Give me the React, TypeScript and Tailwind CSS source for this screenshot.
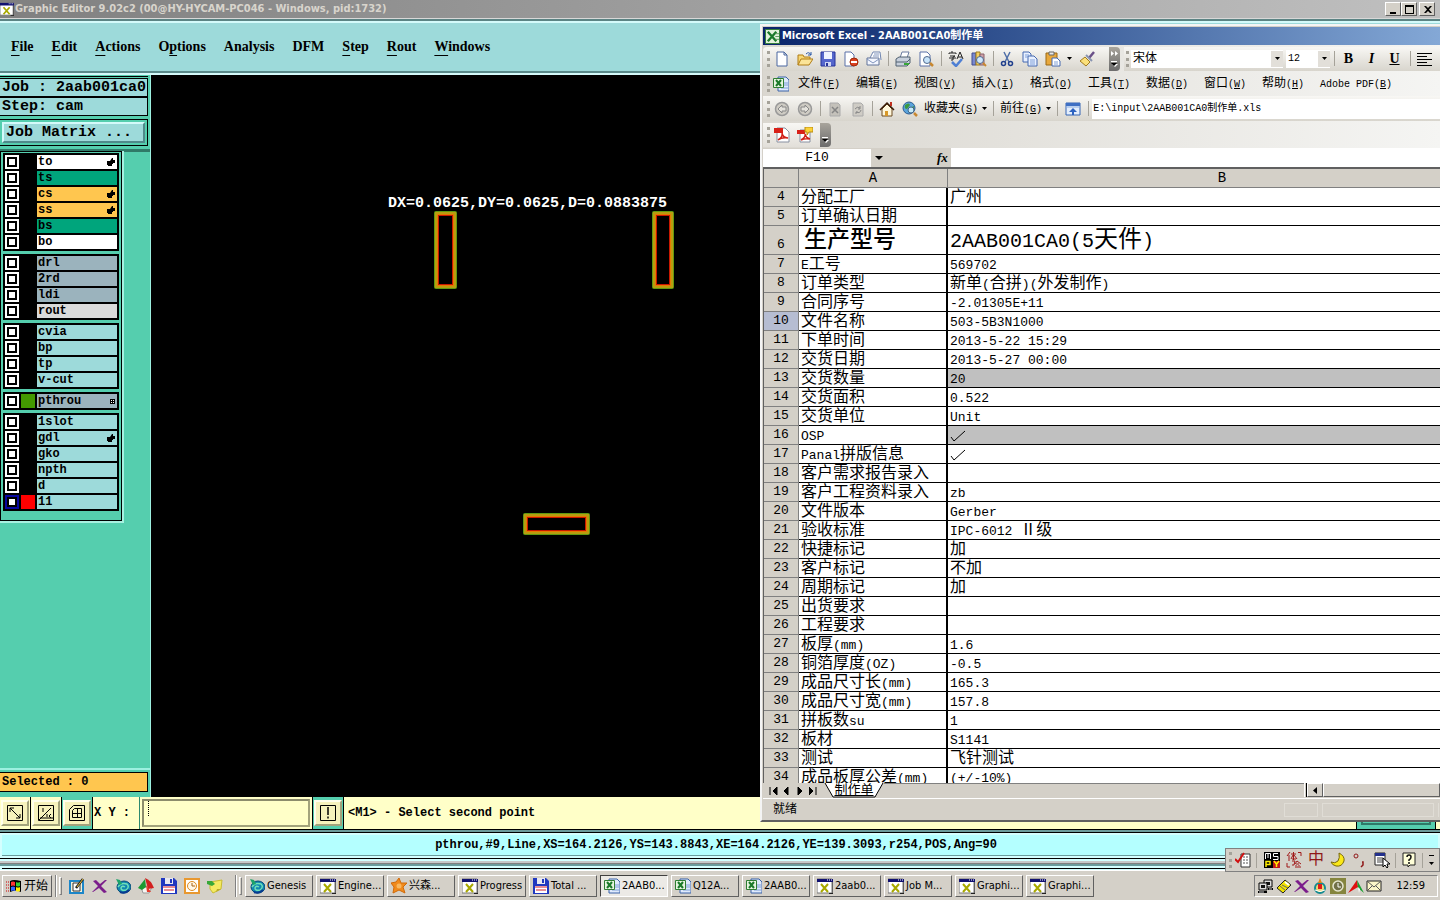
import React from "react";

const icons: Record<string, React.ReactNode> = {
  xwin: (
    <>
      <path d="M0 1h15v14H0z" fill="#fff" stroke="#777" />
      <path d="M0 1h16v3H0z" fill="#101070" />
      <path d="M10 2h1M12 2h1M14 2h1" stroke="#fff" />
      <path d="M4 6l7 8M11 6l-7 8" stroke="#a8a800" strokeWidth="2" />
      <path d="M12 15.500h4V4" stroke="#222" fill="none" />
    </>
  ),
  excel: (
    <>
      <path d="M5 1h8l3 3v11H5z" fill="#dfeafc" stroke="#3a62a8" />
      <path d="M11 7h4M11 9h4M8 12h7" stroke="#7fa0d8" />
      <path d="M.5 2.500h10v9H.5z" fill="#e6f5e0" stroke="#2f7d32" />
      <path d="M3 4l5 6M8 4l-5 6" stroke="#1b7a2a" strokeWidth="2" />
    </>
  ),
  excelApp: (
    <>
      <path d="M.5.500h15v15H.5z" fill="#e4f2dc" stroke="#2f7d32" />
      <path d="M3 3l9 10M12 3L3 13" stroke="#1b7a2a" strokeWidth="2.500" />
      <path d="M11 5h4M11 8h4M11 11h4" stroke="#5a9a5a" />
    </>
  ),
  flag: (
    <>
      <path d="M0 4h3M0 7h3M0 10h3M0 13h3" stroke="#c00" strokeDasharray="1 1" />
      <path d="M4 3q3-2 11 0v11q-5-3-11 0z" fill="#000" />
      <path d="M5 4q2-1 4 0v4q-2-1-4 0z" fill="#f33" />
      <path d="M10 4q2 1 4 0v4q-2 1-4 0z" fill="#3c3" />
      <path d="M5 9q2-1 4 0v4q-2-1-4 0z" fill="#36f" />
      <path d="M10 9q2 1 4 0v4q-2 1-4 0z" fill="#fe0" />
    </>
  ),
  desk: (
    <>
      <path d="M1 3h13v12H1z" fill="#f4f0d8" stroke="#1c86c8" strokeWidth="2" />
      <path d="M4 5h7v8H4z" fill="#fff" stroke="#333" />
      <path d="M14 1L7 10" stroke="#222" strokeWidth="2.500" />
      <path d="M14 1L8 9" stroke="#eec238" />
    </>
  ),
  purple: <path d="M1 3l3-1 4 4 5-4h2l-6 6 6 6-3 1-5-5-6 4H0l6-6z" fill="#7b1d8b" />,
  genesis: (
    <>
      <ellipse cx="9" cy="9" rx="7" ry="6" fill="#1286b0" stroke="#064c78" />
      <path d="M3 9q3-5 9-3 3 3-1 6-5 1-5-2 1-3 4-1" fill="none" stroke="#6fe0b8" strokeWidth="1.500" />
      <path d="M1 1l4 1 2 4-3 1z" fill="#1da36a" />
      <path d="M5 14q5 2 9-2" stroke="#083a90" strokeWidth="2" fill="none" />
    </>
  ),
  tri: (
    <>
      <path d="M3 9h11l-3 6H5z" fill="#f6f6f2" stroke="#999" />
      <path d="M7 0q6 2 9 10l-6 1z" fill="#d32020" />
      <path d="M0 10L7 1l1 8-4 3z" fill="#1c9a32" />
      <path d="M8 7l5 7H9z" fill="#e83a2a" />
    </>
  ),
  floppy: (
    <>
      <path d="M0 0h13l3 3v13H0z" fill="#2038c0" />
      <path d="M4 0h8v6H4z" fill="#e8e8f0" />
      <path d="M9 1h2v4H9z" fill="#2038c0" />
      <path d="M2 8h12v7H2z" fill="#fff" />
      <path d="M2 9h12M3 12h10" stroke="#d02030" />
    </>
  ),
  clock: (
    <>
      <path d="M1 1h14v14H1z" fill="#fff" stroke="#e89830" strokeWidth="2" />
      <circle cx="8" cy="8" r="4.500" fill="#fff8e8" stroke="#dd8a20" />
      <path d="M8 5v3h3" stroke="#a86010" fill="none" />
    </>
  ),
  note: (
    <>
      <path d="M3 4l12-2-1 9-8 4-3-4z" fill="#f4ea62" stroke="#c8bc30" />
      <path d="M0 3h5l3 3-3 2-5-2z" fill="#38a838" />
      <path d="M9 14l5-3-4 0z" fill="#b8aa28" />
    </>
  ),
  star: (
    <>
      <path d="M8 0l2 5 6 0-4 4 2 6-6-3-6 3 1-6-3-4 5-1z" fill="#f08a1c" stroke="#d06a08" />
      <circle cx="8" cy="8" r="2.500" fill="#f8b860" />
    </>
  ),
  pcs: (
    <>
      <path d="M6 2h8v7H6z" fill="#ddd" stroke="#000" />
      <path d="M8 4h4v3H8z" fill="#111" />
      <path d="M1 5h8v7H1z" fill="#ddd" stroke="#000" />
      <path d="M3 7h4v3H3z" fill="#111" />
      <path d="M0 14h9M10 11h5" stroke="#000" strokeWidth="2" />
      <path d="M1 14h5M11 11h3" stroke="#ccc" />
    </>
  ),
  card: (
    <>
      <path d="M1 10l8-8 6 5-8 8z" fill="#f2e400" stroke="#222" />
      <path d="M4 8l6 5M6 7l6 3" stroke="#666" />
      <path d="M9 4l4 3" stroke="#fff" strokeWidth="2" />
    </>
  ),
  flask: (
    <>
      <circle cx="8" cy="10" r="5" fill="#ecd878" stroke="#128a92" strokeWidth="2" />
      <path d="M8 0l2 5H6z" fill="#e08818" />
      <path d="M6 6h4v5H6z" fill="#e01818" />
      <path d="M3 12q5 3 10 0" stroke="#fff" fill="none" />
    </>
  ),
  oclock: (
    <>
      <path d="M0 0h16v16H0z" fill="#85853e" />
      <circle cx="8" cy="8" r="5" fill="#707048" stroke="#e6e6d0" strokeWidth="1.500" />
      <path d="M8 5v4h3" stroke="#fff" fill="none" />
    </>
  ),
  ared: (
    <>
      <path d="M0 15L9 2l1 7z" fill="#e01010" />
      <path d="M9 2l7 13-6-5z" fill="#18a030" />
      <path d="M10 9l2 2-1 4z" fill="#fff" />
    </>
  ),
  mail: (
    <>
      <path d="M1 3h14v10H1z" fill="#fbf6c8" stroke="#222" />
      <path d="M1 3l7 6 7-6M1 13l5-5M15 13l-5-5" stroke="#555" fill="none" />
    </>
  ),
  fresh: <path d="M3 1h7l3 3v11H3z M10 1v3h3" fill="#fff" stroke="#4a66a0" />,
  open: (
    <>
      <path d="M1 14V4h5l1 2h6v3" fill="#f7d774" stroke="#b07c14" />
      <path d="M1 14l3-6h12l-4 6z" fill="#fbe498" stroke="#b07c14" />
      <path d="M9 3q3-3 5 1M14 1v3h-3" stroke="#2c5aa8" fill="none" />
    </>
  ),
  save: (
    <>
      <path d="M1 1h14v14H1z" fill="#5566cc" stroke="#26339a" />
      <path d="M4 1h8v7H4z" fill="#eef2ff" />
      <path d="M5 11h6v4H5z" fill="#cfd6f2" />
      <path d="M6 12h2v3H6z" fill="#26339a" />
    </>
  ),
  perm: (
    <>
      <path d="M2 1h6l3 3v11H2z" fill="#fff" stroke="#5a70a8" />
      <circle cx="11" cy="11" r="4" fill="#dc4020" stroke="#a02808" />
      <path d="M8 11h6" stroke="#fff" strokeWidth="2" />
    </>
  ),
  letter: (
    <>
      <path d="M4 7l3-6h7l1 8" fill="#fff" stroke="#7085b0" />
      <path d="M1 7h12v7H1z" fill="#f4f7ff" stroke="#607398" />
      <path d="M1 8l6 4 6-4M8 3h5M7 5h6" stroke="#8094bd" fill="none" />
    </>
  ),
  print: (
    <>
      <path d="M5 7l2-6h7l-2 6" fill="#fff" stroke="#6a7ba0" />
      <path d="M1 8l3-2h11v6l-3 3H1z" fill="#c8d0dc" stroke="#506070" />
      <path d="M1 11h11l3-3" stroke="#506070" fill="none" />
      <path d="M9 12h5v2H9z" fill="#38a838" />
    </>
  ),
  preview: (
    <>
      <path d="M2 1h7l3 3v11H2z" fill="#fff" stroke="#5a70a8" />
      <circle cx="9" cy="9" r="3.500" fill="#c8e4fa" stroke="#50688c" />
      <path d="M12 12l3 3" stroke="#c88830" strokeWidth="2.500" />
    </>
  ),
  spell: (
    <>
      <path d="M1 3V2h7v1M4 0v2M2 5h5L5 6v3H3M1 7h7" stroke="#222" fill="none" />
      <path d="M9 8l3-7 3 7M10 6h4" stroke="#222" fill="none" />
      <path d="M4 11l4 4 6-7" stroke="#4f80d4" strokeWidth="2.500" fill="none" />
    </>
  ),
  research: (
    <>
      <path d="M1 2h4v12H1z" fill="#7888d0" stroke="#404c90" />
      <path d="M5 1h4v13H5z" fill="#f4d060" stroke="#9a7a20" />
      <path d="M9 3h4v11H9z" fill="#d0a0a8" stroke="#886068" />
      <circle cx="9" cy="9" r="3.500" fill="#d0e8fc" stroke="#50688c" />
      <path d="M12 12l3 3" stroke="#c88830" strokeWidth="2" />
    </>
  ),
  cut: (
    <>
      <path d="M5 1l5 10M11 1L6 11" stroke="#506fa8" strokeWidth="1.500" />
      <circle cx="4.500" cy="12.500" r="2" fill="none" stroke="#203f8c" strokeWidth="1.500" />
      <circle cx="11.500" cy="12.500" r="2" fill="none" stroke="#203f8c" strokeWidth="1.500" />
    </>
  ),
  copy: (
    <>
      <path d="M1 1h6l2 2v8H1z" fill="#e8f0ff" stroke="#4468b0" />
      <path d="M6 5h6l3 3v7H6z" fill="#e8f0ff" stroke="#4468b0" />
      <path d="M3 4h4M3 6h3M8 9h5M8 11h5M8 13h5" stroke="#80a0d8" />
    </>
  ),
  paste: (
    <>
      <path d="M1 2h11v12H1z" fill="#e8a83c" stroke="#9a6814" />
      <path d="M4 1h5v3H4z" fill="#e8e8e8" stroke="#666" />
      <path d="M7 7h5l3 3v5H7z" fill="#fff" stroke="#4468b0" />
      <path d="M9 11h4M9 13h4" stroke="#80a0d8" />
    </>
  ),
  brush: (
    <>
      <path d="M14 1l-5 6" stroke="#6a5088" strokeWidth="2.500" />
      <path d="M5 6l5 5-4 4-6-5z" fill="#fbe07a" stroke="#a07a20" />
      <path d="M6 4l6 6" stroke="#8894b0" strokeWidth="2" />
    </>
  ),
  back: (
    <>
      <circle cx="8" cy="8" r="6.500" fill="#cfccc4" stroke="#999" strokeWidth="1.500" />
      <path d="M4 8l4-4v2h4v4H8v2z" fill="#e4e2dc" stroke="#888" />
    </>
  ),
  forward: (
    <>
      <circle cx="8" cy="8" r="6.500" fill="#cfccc4" stroke="#999" strokeWidth="1.500" />
      <path d="M12 8L8 4v2H4v4h4v2z" fill="#e4e2dc" stroke="#888" />
    </>
  ),
  stop: (
    <>
      <path d="M3 2h8l2 2v11H3z" fill="#c4c1ba" stroke="#aaa" />
      <path d="M5 6l6 6M11 6l-6 6" stroke="#858585" strokeWidth="1.500" />
    </>
  ),
  refresh: (
    <>
      <path d="M3 2h8l2 2v11H3z" fill="#cfccc5" stroke="#aaa" />
      <path d="M5 8q2-3 5-1M10 5v3H8M11 9q-1 4-5 2M6 13v-2h2" stroke="#888" fill="none" />
    </>
  ),
  home: (
    <>
      <path d="M3 8v7h10V8L8 3z" fill="#fff8dc" stroke="#6a4a20" />
      <path d="M1 9l7-7 7 7" stroke="#3a1c08" strokeWidth="1.500" fill="none" />
      <path d="M11 1h2v4h-2z" fill="#c03020" />
      <path d="M6 10h3v5H6z" fill="#d89828" />
    </>
  ),
  globe: (
    <>
      <circle cx="7" cy="7" r="6" fill="#5aa4dc" stroke="#2c5c90" />
      <path d="M3 4q4-3 5 0l-3 4q-3 0-2-4zM8 7l4-2v4l-3 2z" fill="#3c9a40" />
      <circle cx="9" cy="9" r="3" fill="#c8ecf8" stroke="#468" />
      <path d="M12 12l3 3" stroke="#c88830" strokeWidth="2.500" />
    </>
  ),
  webbar: (
    <>
      <path d="M1 2h14v12H1z" fill="#e4eefc" stroke="#3464b4" />
      <path d="M1 2h14v3H1z" fill="#3f70c4" />
      <path d="M1 6h14" stroke="#90b0e0" />
      <path d="M8 7l4 4H9v3H7v-3H4z" fill="#2c62c0" />
    </>
  ),
  pdf: (
    <>
      <path d="M3 1h8l4 4v10H3z" fill="#fff" stroke="#8890a0" />
      <path d="M0 1h9v5H0z" fill="#d82018" />
      <path d="M4 13q5-3 4-7 1 5 6 5-6-1-10 2" fill="none" stroke="#d02018" strokeWidth="1.500" />
    </>
  ),
  pdfnote: (
    <>
      <path d="M3 3h8l2 2v10H3z" fill="#fff" stroke="#8890a0" />
      <path d="M0 3h8v4H0z" fill="#d82018" />
      <path d="M4 13q5-3 4-6 1 4 5 5-5-1-9 1" fill="none" stroke="#d02018" strokeWidth="1.500" />
      <path d="M8 0h8v5h-4l-2 3V5H8z" fill="#fcd238" stroke="#b88a10" />
    </>
  ),
  align: <path d="M0 2.500h15M0 5.500h10M0 8.500h15M0 11.500h10M0 14.500h15" stroke="#000" />,
  check: (
    <>
      <path d="M6 2h9v13H6z" fill="#fff" stroke="#333" />
      <path d="M8 5h6M8 8h6M8 11h6" stroke="#555" strokeDasharray="2 1" />
      <path d="M0 7l3 3 6-9" stroke="#d01010" strokeWidth="2" fill="none" />
    </>
  ),
  mspy: (
    <>
      <path d="M0 0h16v16H0z" fill="#000" />
      <path d="M9 9h7v7H9z" fill="#c01818" />
      <path d="M1.500 7V1.500h5V7M4 2v4M14 1.500H9.500v3H14v3H9" stroke="#fff" fill="none" />
      <path d="M2 15V9.500h4v3H2" stroke="#fe0" strokeWidth="1.500" fill="none" />
      <path d="M10 9l2.500 3L15 9M12.500 12v3" stroke="#fe0" strokeWidth="1.500" fill="none" />
    </>
  ),
  tiyan: (
    <path
      d="M4 0L1 4M3 3v6M5 2h5M7.500 0v8M7 3L5 7M8 3l3 4M6 7h4M12 .500h3V4M1 11v4h3M6 9h3l-1 4H6M11 9l-2 3M11 9l4 3M10 12h3M9 15h6M10 13v1M13 13v1"
      stroke="#a01818"
      fill="none"
    />
  ),
  moon: <path d="M9 1q6 3 5 8-2 6-8 5-4-1-5-4 4 2 7-1 2-3 1-8z" fill="#fbe818" stroke="#786808" />,
  punct: (
    <>
      <circle cx="4" cy="4" r="2" fill="none" stroke="#901818" />
      <path d="M10 10h1v3l-2 2" fill="none" stroke="#901818" strokeWidth="1.500" />
    </>
  ),
  list: (
    <>
      <path d="M1 1h10v12H1z" fill="#fff" stroke="#222" />
      <path d="M1 1h10v3H1z" fill="#23308c" />
      <path d="M3 6h6M3 8h6M3 10h6" stroke="#444" />
      <path d="M9 6v9l2-2 2 3 1-1-1-3h3z" fill="#fff" stroke="#000" />
    </>
  ),
  help: (
    <>
      <path d="M2 1h12v12h-5l-2 2v-2H2z" fill="#ffffd8" stroke="#222" />
      <path d="M6 5q0-2 2-2t2 2-2 3v1M8 10v2" stroke="#111" strokeWidth="1.500" fill="none" />
    </>
  ),
  diag: (
    <>
      <path d="M.5.500h15v15H.5z" fill="none" stroke="#000" />
      <path d="M3 3l10 10M3 7V3h4M9 13h4V9" stroke="#000" fill="none" />
    </>
  ),
  slope: (
    <>
      <path d="M.5.500h15v15H.5z" fill="none" stroke="#000" />
      <path d="M1 15L13 3M5 3v4M2 13h13M9 9v3M13 9l-2 2 2 2" stroke="#000" fill="none" />
    </>
  ),
  gridb: (
    <>
      <path d="M4.500.500h11v15H.500V4.500z" fill="none" stroke="#000" />
      <path d="M8.500 3v10M3 8.500h10M5.500 3.500h7v9h-9v-7z" stroke="#000" fill="none" />
    </>
  ),
  bang: (
    <>
      <path d="M.5.500h15v15H.5z" fill="none" stroke="#000" />
      <path d="M8 2v8M8 11.500v2" stroke="#000" strokeWidth="1.500" />
    </>
  ),
};

function Icon({ name, className = "size-4" }: { name: string; className?: string }) {
  return (
    <svg viewBox="0 0 16 16" className={`${className} shrink-0`} aria-hidden="true">
      {icons[name]}
    </svg>
  );
}

function Caret() {
  return (
    <svg viewBox="0 0 5 3" className="h-[3px] w-[5px] shrink-0" aria-hidden="true">
      <path d="M0 0h5L2.500 3z" fill="#000" />
    </svg>
  );
}

/* Chinese glyphs take a full cell, Latin ones half of it. */
function Mixed({ text, latin, cjk }: { text: string; latin: string; cjk: string }) {
  const parts = text.split(/([\u2160-\u217f\u3000-\u9fff]+)/).filter(Boolean);
  return (
    <>
      {parts.map((p, i) => (
        <span key={i} className={/[\u2160-\u9fff]/.test(p) ? cjk : latin}>
          {p}
        </span>
      ))}
    </>
  );
}

const MONO = "font-['Liberation_Mono','Noto_Sans_CJK_SC',monospace]";
const UI = "font-['DejaVu_Sans_Condensed','Noto_Sans_CJK_SC',sans-serif]";
const RAISED = "border border-t-white border-l-white border-r-[#606060] border-b-[#606060]";

type Layer = { name: string; bg: string; mark?: "hand" | "grid"; color?: string; on?: boolean };
const AQ = "bg-[#9ddada]";
const layers: Layer[][] = [
  [
    { name: "to", bg: "bg-white", mark: "hand" },
    { name: "ts", bg: "bg-[#00a57c]" },
    { name: "cs", bg: "bg-[#ffc64f]", mark: "hand" },
    { name: "ss", bg: "bg-[#ffc64f]", mark: "hand" },
    { name: "bs", bg: "bg-[#00a57c]" },
    { name: "bo", bg: "bg-white" },
  ],
  [
    { name: "drl", bg: "bg-[#9bb3bd]" },
    { name: "2rd", bg: "bg-[#9bb3bd]" },
    { name: "ldi", bg: "bg-[#9bb3bd]" },
    { name: "rout", bg: "bg-[#dadada]" },
  ],
  [
    { name: "cvia", bg: AQ },
    { name: "bp", bg: AQ },
    { name: "tp", bg: AQ },
    { name: "v-cut", bg: AQ },
  ],
  [{ name: "pthrou", bg: "bg-[#9bb3bd]", mark: "grid", color: "bg-[#439a00]" }],
  [
    { name: "1slot", bg: AQ },
    { name: "gdl", bg: AQ, mark: "hand" },
    { name: "gko", bg: AQ },
    { name: "npth", bg: AQ },
    { name: "d", bg: AQ },
    { name: "11", bg: AQ, color: "bg-[#ff0000]", on: true },
  ],
];

function LayerRow({ layer }: { layer: Layer }) {
  return (
    <label className="flex h-[14px] gap-[2px]">
      <span className={`flex w-[14px] items-center justify-center ${layer.on ? "bg-[#0808a0]" : "bg-white"}`}>
        <input
          type="checkbox"
          defaultChecked={layer.on}
          className="m-0 size-[10px] appearance-none border-2 border-black bg-white"
        />
      </span>
      <span className={`w-[14px] ${layer.color ?? "bg-black"}`} />
      <span className={`flex flex-1 items-center justify-between pl-px pr-[2px] text-xs leading-[14px] font-bold ${layer.bg}`}>
        {layer.name}
        {layer.mark === "hand" && (
          <svg viewBox="0 0 8 8" className="size-2" aria-hidden="true">
            <path d="M0 3h3l2-3h1v2h2v3H6v1H5v2H1V7H0z" fill="#000" />
          </svg>
        )}
        {layer.mark === "grid" && (
          <svg viewBox="0 0 5 5" className="size-[5px]" aria-hidden="true">
            <path d="M0 0h5v5H0z" />
            <path d="M1 1h1v1H1zM3 1h1v1H3zM1 3h1v1H1zM3 3h1v1H3z" fill="#fff" />
          </svg>
        )}
      </span>
    </label>
  );
}

const menus: [string, string, string][] = [
  ["", "F", "ile"],
  ["", "E", "dit"],
  ["", "A", "ctions"],
  ["O", "p", "tions"],
  ["Analysis", "", ""],
  ["DFM", "", ""],
  ["", "S", "tep"],
  ["", "R", "out"],
  ["", "W", "indows"],
];

function Sidebar() {
  return (
    <aside className="flex w-[151px] shrink-0 flex-col border-r border-[#9df0e0] bg-[#55ceae] text-black">
      <div className="mr-[2px] mt-px flex flex-col gap-[3px] border-t border-black pt-px">
        <div className="border-y border-r border-black text-[15px] leading-[17px] font-bold">
          <div className="border-b-2 border-black bg-[#9ddada] pl-[2px] whitespace-nowrap">Job : 2aab001ca0</div>
          <div className="bg-[#9ddada] pl-[2px]">Step: cam</div>
        </div>
        <div className="border-y border-r border-black p-[2px]">
          <button className="block h-[21px] w-full border-2 border-t-[#d4fafa] border-r-[#4f8a8a] border-b-[#4f8a8a] border-l-[#d4fafa] bg-[#9ddada] pl-[2px] text-left text-[15px] leading-[17px] font-bold">
            Job Matrix ...
          </button>
        </div>
      </div>
      <div className="mt-[3px] h-[3px] bg-[#2f7a68]" />
      <div className="-mt-px w-[124px] border-r-2 border-b-2 border-[#a8f0e0]">
        <div className="flex flex-col gap-[3px] border border-black bg-[#55ceae] px-[2px] pt-px pb-[9px]">
          {layers.map((group, i) => (
            <div key={i} className="flex flex-col gap-[2px] border-2 border-black bg-black">
              {group.map((l) => (
                <LayerRow key={l.name} layer={l} />
              ))}
            </div>
          ))}
        </div>
      </div>
      <div className="flex-1" />
      <div className="h-[2px] bg-[#9df0e0]" />
      <div className="mt-[2px] mr-[2px] mb-[5px] border-y border-r border-black bg-[#ffc64f] pl-[2px] text-xs leading-[18px] font-bold">
        Selected : 0
      </div>
    </aside>
  );
}

function Slot({ className }: { className: string }) {
  return (
    <svg className={`absolute ${className}`} aria-hidden="true">
      <rect width="100%" height="100%" rx="2" fill="#5f9a10" />
      <rect x="1" y="1" className="h-[calc(100%-2px)] w-[calc(100%-2px)]" fill="#b89c10" />
      <rect x="3" y="3" className="h-[calc(100%-6px)] w-[calc(100%-6px)]" fill="#e87800" />
      <rect x="4" y="4" className="h-[calc(100%-8px)] w-[calc(100%-8px)]" fill="#c81800" />
      <rect x="5" y="5" className="h-[calc(100%-10px)] w-[calc(100%-10px)]" fill="#000" />
    </svg>
  );
}

function ToolButton({ icon, label, teal }: { icon: string; label: string; teal?: boolean }) {
  return (
    <span className={`flex h-full w-[31px] items-center border-r border-black p-px ${teal ? "bg-[#55ceae]" : "bg-[#ffffc8]"}`}>
      <button
        aria-label={label}
        className="flex h-[26px] w-full items-center justify-center border-2 border-t-[#ffffec] border-r-[#a3a37c] border-b-[#a3a37c] border-l-[#ffffec] bg-[#f6f2bc]"
      >
        <Icon name={icon} />
      </button>
    </span>
  );
}

function Grip() {
  return <span className="h-4 w-[3px] shrink-0 border-l-[3px] border-dotted border-[#a5a299]" />;
}
function Sep() {
  return <span className="h-[15px] w-px shrink-0 bg-[#a5a299]" />;
}
function Tool({ name }: { name: string }) {
  return (
    <button aria-label={name} className="flex w-[23px] shrink-0 justify-center">
      <Icon name={name} />
    </button>
  );
}
function Overflow({ arrows }: { arrows?: boolean }) {
  return (
    <button
      aria-label="Toolbar options"
      className="flex h-6 w-[11px] shrink-0 flex-col items-center justify-between rounded-r bg-gradient-to-b from-[#a8a49c] to-[#6c6c6c] py-1"
    >
      <svg viewBox="0 0 7 5" className="h-[5px] w-[7px]" aria-hidden="true">
        {arrows && <path d="M0 0l3 2.500L0 5zM4 0l3 2.500L4 5z" fill="#fff" />}
      </svg>
      <svg viewBox="0 0 7 6" className="h-[6px] w-[7px]" aria-hidden="true">
        <path d="M0 0h6v1H0z" fill="#fff" />
        <path d="M1 3h6L4 6z" fill="#fff" />
        <path d="M0 2h6L3 5z" fill="#000" />
      </svg>
    </button>
  );
}

function MenuText({ text, k }: { text: string; k: string }) {
  return (
    <span className="whitespace-nowrap">
      <Mixed text={text} latin="text-[10px]" cjk="text-xs" />
      <span className="text-[10px]">
        (<span className="underline">{k}</span>)
      </span>
    </span>
  );
}

const excelMenus: [string, string, string][] = [
  ["文件", "F", "w-[58px]"],
  ["编辑", "E", "w-[58px]"],
  ["视图", "V", "w-[58px]"],
  ["插入", "I", "w-[58px]"],
  ["格式", "O", "w-[58px]"],
  ["工具", "T", "w-[58px]"],
  ["数据", "D", "w-[58px]"],
  ["窗口", "W", "w-[58px]"],
  ["帮助", "H", "w-[58px]"],
  ["Adobe PDF", "B", "w-[80px]"],
];

const rows: [number, string, string][] = [
  [4, "分配工厂", "广州"],
  [5, "订单确认日期", ""],
  [6, "生产型号", "2AAB001CA0(5天件)"],
  [7, "E工号", "569702"],
  [8, "订单类型", "新单(合拼)(外发制作)"],
  [9, "合同序号", "-2.01305E+11"],
  [10, "文件名称", "503-5B3N1000"],
  [11, "下单时间", "2013-5-22 15:29"],
  [12, "交货日期", "2013-5-27 00:00"],
  [13, "交货数量", "20"],
  [14, "交货面积", "0.522"],
  [15, "交货单位", "Unit"],
  [16, "OSP", "✓"],
  [17, "Panal拼版信息", "✓"],
  [18, "客户需求报告录入", ""],
  [19, "客户工程资料录入", "zb"],
  [20, "文件版本", "Gerber"],
  [21, "验收标准", "IPC-6012 Ⅱ级"],
  [22, "快捷标记", "加"],
  [23, "客户标记", "不加"],
  [24, "周期标记", "加"],
  [25, "出货要求", ""],
  [26, "工程要求", ""],
  [27, "板厚(mm)", "1.6"],
  [28, "铜箔厚度(OZ)", "-0.5"],
  [29, "成品尺寸长(mm)", "165.3"],
  [30, "成品尺寸宽(mm)", "157.8"],
  [31, "拼板数su", "1"],
  [32, "板材", "S1141"],
  [33, "测试", "飞针测试"],
  [34, "成品板厚公差(mm)", "(+/-10%)"],
];

function Sheet() {
  return (
    <div className="min-h-0 flex-1 overflow-hidden border-t-2 border-l border-[#606060] bg-white">
      <table className={`w-full table-fixed border-separate border-spacing-0 text-left ${MONO}`}>
        <colgroup>
          <col className="w-[35px]" />
          <col className="w-[149px]" />
          <col />
        </colgroup>
        <thead>
          <tr className="h-[19px] bg-[#d4d0c8] text-center text-[14px] leading-[18px]">
            <th className="border-r border-b border-[#808080] p-0" aria-label="Row" />
            <th className="border-r border-b border-[#808080] p-0 text-center font-normal">A</th>
            <th className="border-b border-[#808080] p-0 pl-14 text-center font-normal">B</th>
          </tr>
        </thead>
        <tbody>
          {rows.map(([n, a, b]) => {
            const big = n === 6;
            const h = big ? "h-[29px] leading-[28px]" : "h-[19px] leading-[18px]";
            const latin = big ? "text-[20px]" : "text-[13px]";
            const inner = big ? "h-[28px] pt-px" : "h-[18px] pt-px";
            return (
              <tr key={n} className={h}>
                <th
                  className={`overflow-hidden border-r border-b border-[#808080] p-0 text-center text-[13px] font-normal ${big ? "align-bottom leading-[18px]" : ""} ${n === 10 ? "bg-[#b6bdd2]" : "bg-[#d4d0c8]"}`}
                >
                  {n}
                </th>
                <td className={`overflow-hidden border-r-2 border-b border-black p-0 whitespace-nowrap ${big ? "pl-[5px] font-medium" : "pl-[2px]"}`}>
                  <div className={`overflow-hidden ${inner}`}>
                    <Mixed text={a} latin={latin} cjk={big ? "text-[23px]" : "text-[16px]"} />
                  </div>
                </td>
                <td
                  className={`overflow-hidden border-b border-black p-0 pl-[2px] whitespace-nowrap ${n === 13 || n === 16 ? "bg-[#c0c0c0]" : ""}`}
                >
                  <div className={`overflow-hidden ${inner}`}>
                    {b === "✓" ? (
                      <svg viewBox="0 0 16 12" className="mt-[3px] h-3 w-4" role="img" aria-label="✓">
                        <path d="M1 7l3 4L15 1" fill="none" stroke="#000" />
                      </svg>
                    ) : (
                      <Mixed text={b} latin={latin} cjk={big ? "text-[24px]" : "text-[16px]"} />
                    )}
                  </div>
                </td>
              </tr>
            );
          })}
        </tbody>
      </table>
    </div>
  );
}

function ExcelWindow() {
  return (
    <section
      className={`absolute top-6 right-0 left-[760px] flex h-[798px] flex-col overflow-hidden border-2 border-r-0 border-t-[#f4f4f4] border-b-[#606060] border-l-[#f4f4f4] bg-[#d4d0c8] pt-px pl-px text-black ${MONO}`}
    >
      <header className="flex h-[18px] shrink-0 items-center gap-[2px] bg-gradient-to-r from-[#0a246a] to-[#84a8d6] pl-[2px] text-white">
        <Icon name="excelApp" className="size-[15px]" />
        <h1 className={`text-[11px] leading-[18px] font-bold whitespace-nowrap ${UI}`}>Microsoft Excel - 2AAB001CA0制作单</h1>
      </header>
      <div className="shrink-0 bg-gradient-to-r from-[#dad7d0] to-[#f5f5f3]">
        <div className="flex h-[27px] items-center">
          <div className="flex h-6 shrink-0 items-center rounded-l bg-gradient-to-b from-[#f8f7f4] to-[#d8d5cd] pl-1">
            <Grip />
            {["fresh", "open", "save", "perm", "letter"].map((n) => (
              <Tool key={n} name={n} />
            ))}
            <span className="w-[3px]" />
            <Sep />
            <span className="w-[2px]" />
            {["print", "preview"].map((n) => (
              <Tool key={n} name={n} />
            ))}
            <span className="w-[4px]" />
            <Sep />
            <span className="w-[2px]" />
            {["spell", "research"].map((n) => (
              <Tool key={n} name={n} />
            ))}
            <span className="w-[3px]" />
            <Sep />
            <span className="w-px" />
            {["cut", "copy", "paste"].map((n) => (
              <Tool key={n} name={n} />
            ))}
            <span className="w-[3px]" />
            <Caret />
            <span className="w-1" />
            <Tool name="brush" />
            <span className="w-[10px]" />
          </div>
          <Overflow arrows />
          <div className="ml-1 flex h-6 min-w-0 flex-1 items-center bg-gradient-to-b from-[#f8f7f4] to-[#d8d5cd] pl-[2px]">
            <Grip />
            <label className="ml-[2px] flex h-[18px] w-[152px] shrink-0 items-center bg-white pl-[2px]">
              <select
                aria-label="Font"
                defaultValue="宋体"
                className="h-[18px] flex-1 appearance-none bg-white text-xs leading-[18px]"
              >
                <option>宋体</option>
              </select>
              <span className="flex h-4 w-3 items-center justify-center bg-[#e2dfd9]">
                <Caret />
              </span>
            </label>
            <label className="ml-[3px] flex h-[18px] w-[44px] shrink-0 items-center bg-white pl-[2px]">
              <select
                aria-label="Font size"
                defaultValue="12"
                className="h-[18px] min-w-0 flex-1 appearance-none bg-white text-[10px] leading-[18px]"
              >
                <option>12</option>
              </select>
              <span className="flex h-4 w-3 items-center justify-center bg-[#e2dfd9]">
                <Caret />
              </span>
            </label>
            <span className="w-1" />
            <Sep />
            <div className="ml-[2px] flex shrink-0 font-['Liberation_Serif',serif] text-[14px] font-bold">
              <button className="w-[23px]">B</button>
              <button className="w-[23px] italic">I</button>
              <button className="w-[23px] underline">U</button>
            </div>
            <span className="w-1" />
            <Sep />
            <span className="w-[2px]" />
            <Tool name="align" />
          </div>
        </div>
        <nav className="flex h-6 items-center pl-1 leading-4">
          <Grip />
          <span className="w-[3px]" />
          <Icon name="excel" />
          <span className="w-[9px]" />
          {excelMenus.map(([t, k, w]) => (
            <button key={t} className={`shrink-0 text-left ${w}`}>
              <MenuText text={t} k={k} />
            </button>
          ))}
        </nav>
        <div className="flex h-[25px] items-center bg-gradient-to-b from-[#f8f7f4] to-[#d8d5cd] pl-1 leading-4">
          <Grip />
          <Tool name="back" />
          <Tool name="forward" />
          <span className="w-1" />
          <Sep />
          <span className="w-[2px]" />
          <Tool name="stop" />
          <Tool name="refresh" />
          <span className="w-[3px]" />
          <Sep />
          <span className="w-[2px]" />
          <Tool name="home" />
          <Tool name="globe" />
          <span className="w-[3px]" />
          <button className="flex shrink-0 items-center gap-1">
            <MenuText text="收藏夹" k="S" />
            <Caret />
          </button>
          <span className="w-[6px]" />
          <Sep />
          <span className="w-[6px]" />
          <button className="flex shrink-0 items-center gap-1">
            <MenuText text="前往" k="G" />
            <Caret />
          </button>
          <span className="w-[6px]" />
          <Sep />
          <span className="w-[3px]" />
          <Tool name="webbar" />
          <span className="w-1" />
          <Sep />
          <label className="ml-[3px] flex h-5 flex-1 items-center bg-white pl-px whitespace-nowrap">
            <span className="sr-only">Address</span>
            <input
              className="h-5 w-full bg-white text-[10px] leading-5 outline-none"
              defaultValue="E:\input\2AAB001CA0制作单.xls"
            />
          </label>
        </div>
        <div className="flex h-[27px] items-center">
          <div className="flex h-6 items-center bg-gradient-to-b from-[#f8f7f4] to-[#e2dfd9] pl-1">
            <Grip />
            <Tool name="pdf" />
            <Tool name="pdfnote" />
            <span className="w-1" />
          </div>
          <Overflow />
        </div>
      </div>
      <div className="flex h-[19px] shrink-0 items-center bg-[#d4d0c8]">
        <input aria-label="Name box" defaultValue="F10" className="h-[18px] w-[108px] bg-white text-center text-[13px]" />
        <span className="flex w-4 justify-center">
          <svg viewBox="0 0 8 4" className="h-1 w-2" aria-hidden="true">
            <path d="M0 0h8L4 4z" />
          </svg>
        </span>
        <span className="w-[50px]" />
        <span className="w-[14px] shrink-0 font-['Liberation_Serif',serif] text-[13px] font-bold italic">fx</span>
        <input aria-label="Formula" className="h-[19px] min-w-0 flex-1 bg-white" />
      </div>
      <Sheet />
      <div className="flex h-4 shrink-0 items-start border-b border-white pl-1">
        <div className="flex h-4 w-[57px] items-center justify-between pr-1">
          {["M1 0v8M8 0v8L4 4z", "M6 0v8L2 4z", "M2 0v8l4-4z", "M0 0v8l4-4zM7 0v8"].map((d) => (
            <button key={d} aria-label="Scroll sheets" className="flex size-3 items-center justify-center">
              <svg viewBox="0 0 9 8" className="h-2 w-[9px]" aria-hidden="true">
                <path d={d} stroke="#000" strokeWidth="1" />
              </svg>
            </button>
          ))}
        </div>
        <div className="relative flex h-[15px] w-[60px] items-center justify-center text-[13px] leading-[15px]">
          <svg viewBox="0 0 60 15" className="absolute inset-0 size-full" aria-hidden="true">
            <path d="M1 0l8 14h42l8-14" fill="#fff" stroke="#000" />
          </svg>
          <button className="relative underline">制作单</button>
        </div>
        <div className="h-[14px] flex-1 border-t border-[#808080]" />
        <span className="h-[14px] w-[3px] border-x border-black border-l-white" />
        <button aria-label="Scroll left" className={`flex h-[14px] w-4 items-center justify-center ${RAISED}`}>
          <svg viewBox="0 0 4 7" className="h-[7px] w-1" aria-hidden="true">
            <path d="M4 0v7L0 3.500z" />
          </svg>
        </button>
        <div className={`h-[14px] w-[117px] ${RAISED}`} />
      </div>
      <footer className="flex h-[21px] shrink-0 items-center justify-between pl-[10px] text-xs">
        <span>就绪</span>
        <span className="flex gap-1">
          <span className="h-[14px] w-[34px] border border-[#e0ddd6]" />
          <span className="h-[14px] w-[112px] border border-[#e0ddd6]" />
          <span className="h-[14px] w-[2px] border-l border-[#e0ddd6]" />
        </span>
      </footer>
    </section>
  );
}

const tasks: [string, string, boolean?][] = [
  ["genesis", "Genesis"],
  ["xwin", "Engine..."],
  ["star", "兴森..."],
  ["xwin", "Progress"],
  ["floppy", "Total ..."],
  ["excel", "2AAB0...", true],
  ["excel", "Q12A..."],
  ["excel", "2AAB0..."],
  ["xwin", "2aab0..."],
  ["xwin", "Job M..."],
  ["xwin", "Graphi..."],
  ["xwin", "Graphi..."],
];

function Divider() {
  return (
    <span className="flex gap-[2px]">
      <span className="h-[22px] w-[2px] border-l border-[#808080] bg-white" />
      <span className="h-[18px] w-[3px] self-center border border-t-white border-r-[#808080] border-b-[#808080] border-l-white" />
    </span>
  );
}

function Taskbar() {
  return (
    <footer className={`flex h-[30px] shrink-0 items-center border-t border-white bg-[#d4d0c8] pt-px pr-[2px] pl-[2px] text-[11px] text-black ${UI}`}>
      <button className={`flex h-[22px] w-[50px] items-center gap-[2px] pl-[3px] text-xs leading-[18px] whitespace-nowrap ${RAISED}`}>
        <Icon name="flag" />
        <span>开始</span>
      </button>
      <span className="w-[3px]" />
      <Divider />
      <span className="flex gap-[7px] pl-[7px]">
        {["desk", "purple", "genesis", "tri", "floppy", "clock", "note"].map((n) => (
          <button key={n} aria-label={n}>
            <Icon name={n} />
          </button>
        ))}
      </span>
      <span className="w-3" />
      <Divider />
      <span className="flex min-w-0 gap-[3px] pl-[3px]">
        {tasks.map(([icon, label, active], i) => (
          <button
            key={i}
            className={`flex h-[22px] w-[68px] items-center gap-[2px] overflow-hidden border pl-[3px] whitespace-nowrap ${
              active
                ? "border-t-[#404040] border-r-white border-b-white border-l-[#404040] bg-[#eceae6]"
                : "border-t-white border-r-[#606060] border-b-[#606060] border-l-white"
            }`}
          >
            <Icon name={icon} />
            <span>{label}</span>
          </button>
        ))}
      </span>
      <span className="flex-1" />
      <span className="flex h-[22px] w-[184px] shrink-0 items-center gap-[2px] border border-t-[#808080] border-r-white border-b-white border-l-[#808080] pl-[3px]">
        {["pcs", "card", "purple", "flask", "oclock", "ared", "mail"].map((n) => (
          <Icon key={n} name={n} />
        ))}
        <time className="flex-1 pr-3 text-right">12:59</time>
      </span>
    </footer>
  );
}

export default function App() {
  return (
    <div className={`relative flex min-h-screen flex-col overflow-hidden bg-[#9ddada] text-black ${MONO}`}>
      <header className="flex h-[19px] shrink-0 items-center justify-between border-b border-[#d8d8d8] bg-gradient-to-r from-[#808080] to-[#c0c0c0] pr-[5px]">
        <div className="flex items-center gap-px">
          <Icon name="xwin" className="size-[14px]" />
          <h1 className={`text-[11px] leading-[18px] font-bold text-[#d8d4cc] ${UI}`}>
            Graphic Editor 9.02c2 (00@HY-HYCAM-PC046 - Windows, pid:1732)
          </h1>
        </div>
        <div className="flex">
          {["M3 9h6v2H3z", "M2 2h9v9H2zM3 4v6h7V4z", "M3 3h2l2 2 2-2h2L8 6.500 11 10H9L7 8l-2 2H3l3-3.500z"].map((d, i) => (
            <button
              key={d}
              aria-label={["Minimize", "Maximize", "Close"][i]}
              className={`flex h-[14px] w-4 items-center justify-center bg-[#d4d0c8] ${i === 2 ? "ml-[2px]" : ""} ${RAISED}`}
            >
              <svg viewBox="0 0 13 12" className="h-3 w-[13px]" aria-hidden="true">
                <path d={d} fillRule="evenodd" />
              </svg>
            </button>
          ))}
        </div>
      </header>
      <div className="h-[2px] shrink-0 bg-[#5c8484]" />
      <nav className="flex h-[50px] shrink-0 items-center gap-[18px] border-t-2 border-[#d4fafa] pb-[2px] pl-[11px] font-['Liberation_Serif',serif] text-[14px] font-bold">
        {menus.map(([a, u, b]) => (
          <button key={a + u + b}>
            {a}
            <span className="underline underline-offset-4 [text-decoration-skip-ink:none]">{u}</span>
            {b}
          </button>
        ))}
      </nav>
      <div className="h-1 shrink-0 border-t-2 border-b-2 border-t-[#5a8a8a] border-b-[#d4fafa]" />
      <main className="flex min-h-[722px] flex-1">
        <Sidebar />
        <div className="relative flex-1 bg-black">
          <span className="absolute top-[120px] left-[237px] text-[15px] leading-[18px] font-bold whitespace-nowrap text-white">
            DX=0.0625,DY=0.0625,D=0.0883875
          </span>
          <Slot className="top-[136px] left-[283px] h-[78px] w-[23px]" />
          <Slot className="top-[136px] left-[501px] h-[78px] w-[22px]" />
          <Slot className="top-[438px] left-[372px] h-[22px] w-[67px]" />
        </div>
      </main>
      <div className="flex h-8 shrink-0 items-center bg-[#ffffc8] text-xs font-bold">
        <ToolButton icon="diag" label="Line mode" />
        <ToolButton icon="slope" label="Angle mode" />
        <ToolButton icon="gridb" label="Grid" teal />
        <label htmlFor="xy" className="w-[46px] pl-px whitespace-nowrap">
          X Y :
        </label>
        <span className="relative flex h-full w-[174px] items-center border-x border-l-[#2c8a70] border-r-black px-[2px]">
          <input
            id="xy"
            className="h-[28px] w-full border-2 border-t-[#8c8c6c] border-r-[#a3a37c] border-b-[#a3a37c] border-l-[#8c8c6c] bg-[#ffffc8] outline-none"
          />
          <span className="absolute top-1 left-2 h-[15px] border-l border-dotted border-black" />
        </span>
        <ToolButton icon="bang" label="Stop" teal />
        <span className="flex-1 pl-1 whitespace-nowrap">&lt;M1&gt; - Select second point</span>
        <span className="mr-1 h-full w-[80px] border-x border-black bg-[#55ceae] p-1">
          <span className="block h-full border-2 border-[#2f7a68]" />
        </span>
      </div>
      <div className="h-1 shrink-0 border-y border-black bg-[#6c9c9c]" />
      <div className="h-[25px] shrink-0 bg-[#d4ffff] p-[2px]">
        <p className="h-[21px] border-b border-[#6b9c9c] bg-[#b4ffff] text-center text-xs leading-[20px] font-bold">
          <span className="pr-2">pthrou,#9,Line,XS=164.2126,YS=143.8843,XE=164.2126,YE=139.3093,r254,POS,Ang=90</span>
        </p>
      </div>
      <div className="h-3 shrink-0 border-t border-black bg-[#d4ffff] pt-[2px]">
        <div className="h-[3px] border-b border-[#808080] bg-[#c8c8c8]" />
        <div className="h-[2px] bg-[#6c9c9c]" />
        <div className="mt-[2px] ml-[2px] h-px bg-black" />
      </div>
      <Taskbar />
      <ExcelWindow />
      <div className="absolute right-0 bottom-[28px] flex h-6 w-[215px] items-center border border-[#808080] bg-[#d4d0c8] pl-[3px]">
        <Grip />
        <span className="w-[3px]" />
        <Icon name="check" />
        <span className="w-[5px]" />
        <Sep />
        <span className="flex items-center gap-[6px] pl-[7px]">
          <Icon name="mspy" />
          <Icon name="tiyan" />
          <span className="text-[16px] leading-4 text-[#901818]">中</span>
          <Icon name="moon" />
          <Icon name="punct" />
          <Icon name="list" />
        </span>
        <span className="w-[5px]" />
        <Sep />
        <span className="w-[5px]" />
        <Icon name="help" />
        <span className="w-[5px]" />
        <Sep />
        <span className="flex flex-1 flex-col items-center gap-[6px]">
          <span className="h-px w-[5px] bg-black" />
          <Caret />
        </span>
      </div>
    </div>
  );
}
